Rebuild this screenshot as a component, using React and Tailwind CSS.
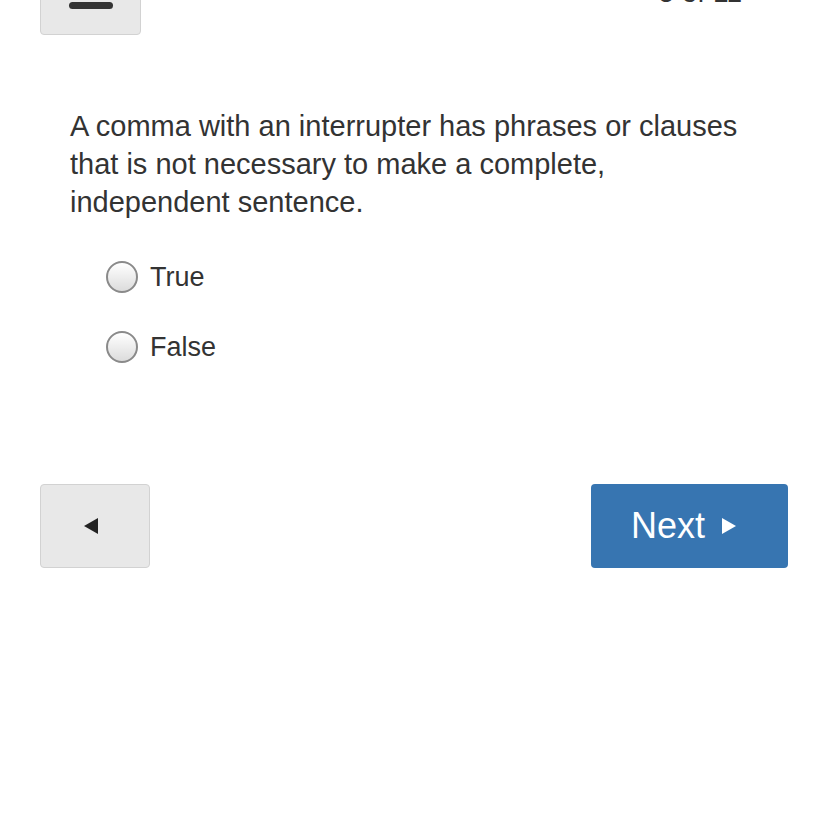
import React, { useState } from 'react';

const QuizPage = () => {
  const [answer, setAnswer] = useState('');

  const options = ['True', 'False'];

  return (
    <div className="w-[828px] h-[828px] overflow-hidden bg-white px-[40px] text-[#333]" style={{ fontFamily: '"Liberation Sans", Arial, sans-serif' }}>
      {/* Header */}
      <div className="flex justify-between items-end -mt-[30px]">
        <button className="w-[101px] h-[65px] bg-[#e8e8e8] border border-[#d2d2d2] rounded-[4px] flex items-end justify-center pb-[25px]">
          <span className="block w-[44px] h-[7px] rounded-full bg-[#333]" />
        </button>
        <div className="mr-[46px] mb-[28px] text-[28px] leading-none text-[#333]">5 of 11</div>
      </div>

      {/* Question */}
      <p className="mt-[72px] px-[30px] w-[740px] text-[29px] leading-[38px] text-[#333]">
        A comma with an interrupter has phrases or clauses that is not necessary to make a complete, independent sentence.
      </p>

      {/* Options */}
      <div className="mt-[37px] pl-[66px] flex flex-col gap-[32px]">
        {options.map((opt) => (
          <label key={opt} className="flex items-center h-[38px] cursor-pointer" onClick={() => setAnswer(opt)}>
            <span className="w-[32px] h-[32px] rounded-full border-2 border-[#8a8a8a] bg-gradient-to-b from-white to-[#dcdcdc] flex items-center justify-center">
              {answer === opt && <span className="w-[12px] h-[12px] rounded-full bg-[#333]" />}
            </span>
            <span className="ml-[12px] text-[27px] text-[#333]">{opt}</span>
          </label>
        ))}
      </div>

      {/* Navigation */}
      <div className="mt-[118px] flex justify-between">
        <button className="w-[110px] h-[84px] bg-[#e8e8e8] border border-[#d2d2d2] rounded-[4px] flex items-center justify-center pr-[8px]">
          <svg width="14" height="16" viewBox="0 0 14 16">
            <path d="M0 8 L14 0 L14 16 Z" fill="#222" />
          </svg>
        </button>
        <button className="w-[197px] h-[84px] bg-[#3775b1] rounded-[4px] flex items-center justify-center pr-[12px] text-white text-[36px]">
          Next
          <svg className="ml-[17px]" width="14" height="16" viewBox="0 0 14 16">
            <path d="M0 0 L14 8 L0 16 Z" fill="#fff" />
          </svg>
        </button>
      </div>
    </div>
  );
};

export default function App() {
  return <QuizPage />;
}
